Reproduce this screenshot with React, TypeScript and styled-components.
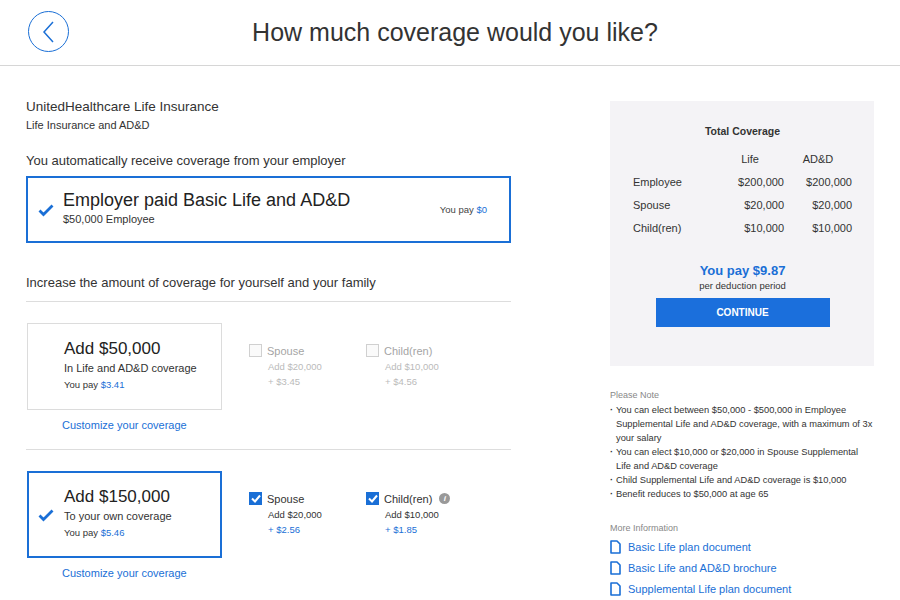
import React from "react";
import styled, { createGlobalStyle } from "styled-components";

const Global = createGlobalStyle`
  html, body { margin: 0; padding: 0; background: #fff; }
  body { font-family: "Liberation Sans", Arial, sans-serif; color: #333; }
`;

const BLUE = "#1a6fd6";

const Header = styled.header`
  height: 65px; border-bottom: 1px solid #d6d6d6; display: flex; align-items: center;
  position: relative; justify-content: center;
`;
const Back = styled.button`
  position: absolute; left: 28px; top: 11px; width: 41px; height: 41px; border-radius: 50%;
  border: 1.5px solid ${BLUE}; background: #fff; padding: 0; display: flex; align-items: center; justify-content: center;
`;
const Title = styled.h1`
  margin: 0; font-weight: 300; font-size: 25px; color: #333; padding-top: 0px; margin-left: 10px;
`;
const Body = styled.div`
  display: flex; padding: 33px 27px 0 26px; gap: 99px;
`;
const Left = styled.div` width: 485px; flex: none; `;
const Right = styled.div` width: 264px; flex: none; `;
const Company = styled.div` font-size: 13.5px; font-weight: 500; color: #333; margin-top: 0; `;
const Small = styled.div` font-size: 11px; color: #333; margin-top: 5px; `;
const Lead = styled.div<{ $top: number }>` font-size: 13px; color: #333; margin-top: ${p => p.$top}px; `;
const EmpBox = styled.div`
  margin-top: 8px; height: 67px; border: 2px solid ${BLUE}; box-sizing: border-box; width: 485px;
  display: flex; align-items: center; padding: 0 22px 0 10px;
`;
const Check = styled.svg` width: 16px; height: 14px; flex: none; `;
const EmpText = styled.div` flex: 1; margin-left: 9px; margin-top: -4px; `;
const EmpTitle = styled.div` font-size: 18px; font-weight: 500; color: #222; `;
const EmpSub = styled.div` font-size: 11px; color: #333; margin-top: 2px; `;
const Pay = styled.span` font-size: 9.5px; color: #444; `;
const Blue = styled.span` color: ${BLUE}; `;
const Rule = styled.hr<{ $top: number }>` border: 0; border-top: 1px solid #ddd; margin: ${p => p.$top}px 0 0; width: 485px; `;
const OptRow = styled.div<{ $top: number }>` display: flex; margin-top: ${p => p.$top}px; `;
const Card = styled.div<{ $sel?: boolean }>`
  width: 195px; height: 87px; box-sizing: border-box; margin-left: 1px;
  border: ${p => (p.$sel ? `2px solid ${BLUE}` : "1px solid #dcdcdc")};
  display: flex; align-items: center; padding-left: ${p => (p.$sel ? 9 : 10)}px;
`;
const CardText = styled.div<{ $sel?: boolean }>` margin-left: ${p => (p.$sel ? 10 : 26)}px; margin-top: -4px; `;
const CardTitle = styled.div` font-size: 17px; font-weight: 500; color: #222; `;
const CardSub = styled.div` font-size: 11px; color: #333; margin-top: 3px; `;
const CardPay = styled.div` font-size: 9.5px; color: #333; margin-top: 5px; `;
const Dep = styled.div<{ $w: number; $on: boolean }>`
  width: ${p => p.$w}px; margin-top: 21px; opacity: ${p => (p.$on ? 1 : 0.45)};
`;
const DepHead = styled.div` display: flex; align-items: center; gap: 5px; font-size: 11px; color: #333; `;
const Box = styled.span<{ $on: boolean }>`
  width: 13px; height: 13px; box-sizing: border-box; display: inline-flex; align-items: center; justify-content: center;
  border: ${p => (p.$on ? "none" : "1px solid #999")}; background: ${p => (p.$on ? BLUE : "#f4f4f4")};
`;
const DepLine = styled.div<{ $blue?: boolean; $on: boolean }>`
  font-size: 9.5px; margin-left: 19px; margin-top: 4px;
  color: ${p => (p.$blue && p.$on ? BLUE : p.$on ? "#333" : "#666")};
`;
const Info = styled.span`
  width: 11px; height: 11px; border-radius: 50%; background: #999; color: #fff; font-size: 8px;
  display: inline-flex; align-items: center; justify-content: center; font-style: italic; font-weight: bold; margin-left: 2px;
`;
const Customize = styled.div<{ $top: number }>` font-size: 11px; color: ${BLUE}; margin: ${p => p.$top}px 0 0 36px; `;

const Panel = styled.div`
  background: #f4f3f6; height: 265px; margin-top: 2px; padding: 24px 22px 0 23px; box-sizing: border-box;
`;
const PanelTitle = styled.div` text-align: center; font-size: 10.5px; font-weight: bold; color: #333; `;
const Grid = styled.div`
  display: grid; grid-template-columns: 1fr 68px 68px; row-gap: 11px; font-size: 11px; color: #333; margin-top: 16px;
`;
const Cell = styled.div<{ $align: string; $bold?: boolean }>` text-align: ${p => p.$align}; ${p => p.$bold ? "font-weight:500;" : ""} `;
const YouPay = styled.div` text-align: center; font-size: 13px; font-weight: bold; color: ${BLUE}; margin-top: 29px; `;
const Per = styled.div` text-align: center; font-size: 9.5px; color: #333; margin-top: 2px; `;
const Continue = styled.button`
  display: block; margin: 7px auto 0; width: 174px; height: 29px; border: 0; background: #1b6fdc; color: #fff;
  font-family: inherit; font-weight: bold; font-size: 10px; padding: 0;
`;
const NoteHead = styled.div<{ $top: number }>` font-size: 9px; color: #888; margin-top: ${p => p.$top}px; `;
const Notes = styled.ul` list-style: none; margin: 3px 0 0; padding: 0; font-size: 9.3px; color: #333; line-height: 14px; `;
const Note = styled.li`
  padding-left: 6px; position: relative;
  &::before { content: "·"; position: absolute; left: 0; top: 0; font-weight: bold; }
`;
const Link = styled.div` display: flex; align-items: center; gap: 7px; font-size: 11px; color: ${BLUE}; margin-top: 7px; height: 14px; `;

const Tick = ({ c = BLUE }: { c?: string }) => (
  <Check viewBox="0 0 16 14"><path d="M1.5 7.5 L5.5 11.5 L14.5 2.5" stroke={c} strokeWidth="2.8" fill="none" /></Check>
);
const SmallTick = () => (
  <svg width="10" height="9" viewBox="0 0 10 9"><path d="M1 4.5 L4 7.5 L9 1.5" stroke="#fff" strokeWidth="2" fill="none" /></svg>
);
const FileIcon = () => (
  <svg width="11" height="14" viewBox="0 0 11 14"><path d="M1 1 H7 L10 4 V13 H1 Z" fill="none" stroke={BLUE} strokeWidth="1.6" strokeLinejoin="round" /></svg>
);

const Dependent = ({ name, add, price, on, w, info }: { name: string; add: string; price: string; on: boolean; w: number; info?: boolean }) => (
  <Dep $w={w} $on={on}>
    <DepHead><Box $on={on}>{on && <SmallTick />}</Box>{name}{info && <Info>i</Info>}</DepHead>
    <DepLine $on={on}>{add}</DepLine>
    <DepLine $on={on} $blue>+ {price}</DepLine>
  </Dep>
);

export default function App() {
  return (
    <>
      <Global />
      <Header>
        <Back aria-label="back">
          <svg width="14" height="24" viewBox="0 0 14 24"><path d="M11 2 L2 12 L11 22" stroke={BLUE} strokeWidth="1.5" fill="none" /></svg>
        </Back>
        <Title>How much coverage would you like?</Title>
      </Header>
      <Body>
        <Left>
          <Company>UnitedHealthcare Life Insurance</Company>
          <Small>Life Insurance and AD&amp;D</Small>
          <Lead $top={22}>You automatically receive coverage from your employer</Lead>
          <EmpBox>
            <Tick />
            <EmpText>
              <EmpTitle>Employer paid Basic Life and AD&amp;D</EmpTitle>
              <EmpSub>$50,000 Employee</EmpSub>
            </EmpText>
            <Pay>You pay <Blue>$0</Blue></Pay>
          </EmpBox>
          <Lead $top={32}>Increase the amount of coverage for yourself and your family</Lead>
          <Rule $top={11} />
          <OptRow $top={21}>
            <Card>
              <CardText>
                <CardTitle>Add $50,000</CardTitle>
                <CardSub>In Life and AD&amp;D coverage</CardSub>
                <CardPay>You pay <Blue>$3.41</Blue></CardPay>
              </CardText>
            </Card>
            <div style={{ width: 27 }} />
            <Dependent w={117} name="Spouse" add="Add $20,000" price="$3.45" on={false} />
            <Dependent w={120} name="Child(ren)" add="Add $10,000" price="$4.56" on={false} />
          </OptRow>
          <Customize $top={9}>Customize your coverage</Customize>
          <Rule $top={18} />
          <OptRow $top={21}>
            <Card $sel>
              <Tick />
              <CardText $sel>
                <CardTitle>Add $150,000</CardTitle>
                <CardSub>To your own coverage</CardSub>
                <CardPay>You pay <Blue>$5.46</Blue></CardPay>
              </CardText>
            </Card>
            <div style={{ width: 27 }} />
            <Dependent w={117} name="Spouse" add="Add $20,000" price="$2.56" on />
            <Dependent w={120} name="Child(ren)" add="Add $10,000" price="$1.85" on info />
          </OptRow>
          <Customize $top={9}>Customize your coverage</Customize>
        </Left>
        <Right>
          <Panel>
            <PanelTitle>Total Coverage</PanelTitle>
            <Grid>
              <div />
              <Cell $align="center" $bold>Life</Cell>
              <Cell $align="center" $bold>AD&amp;D</Cell>
              <Cell $align="left">Employee</Cell><Cell $align="right">$200,000</Cell><Cell $align="right">$200,000</Cell>
              <Cell $align="left">Spouse</Cell><Cell $align="right">$20,000</Cell><Cell $align="right">$20,000</Cell>
              <Cell $align="left">Child(ren)</Cell><Cell $align="right">$10,000</Cell><Cell $align="right">$10,000</Cell>
            </Grid>
            <YouPay>You pay $9.87</YouPay>
            <Per>per deduction period</Per>
            <Continue>CONTINUE</Continue>
          </Panel>
          <NoteHead $top={24}>Please Note</NoteHead>
          <Notes>
            <Note>You can elect between $50,000 - $500,000 in Employee Supplemental Life and AD&amp;D coverage, with a maximum of 3x your salary</Note>
            <Note>You can elect $10,000 or $20,000 in Spouse Supplemental Life and AD&amp;D coverage</Note>
            <Note>Child Supplemental Life and AD&amp;D coverage is $10,000</Note>
            <Note>Benefit reduces to $50,000 at age 65</Note>
          </Notes>
          <NoteHead $top={22}>More Information</NoteHead>
          <Link><FileIcon />Basic Life plan document</Link>
          <Link><FileIcon />Basic Life and AD&amp;D brochure</Link>
          <Link><FileIcon />Supplemental Life plan document</Link>
        </Right>
      </Body>
    </>
  );
}
